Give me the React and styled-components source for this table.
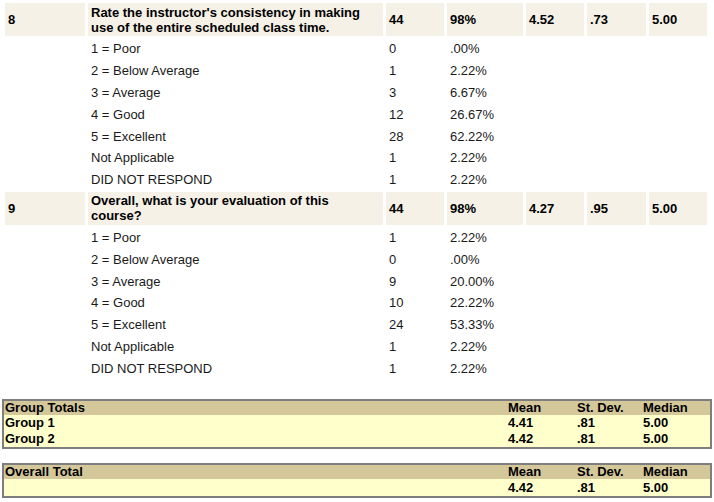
import React from "react";
import styled, { createGlobalStyle } from "styled-components";

const GlobalStyle = createGlobalStyle`
  html, body { margin: 0; padding: 0; background: #ffffff; }
  body {
    font-family: "Liberation Sans", Arial, sans-serif;
    font-size: 13px;
    color: #000;
  }
`;

const Page = styled.div`
  width: 714px;
  padding: 3px 2px 0 2px;
  box-sizing: border-box;
`;

const Survey = styled.div`
  display: grid;
  grid-template-columns: 80px 295px 58px 76px 58px 59px 58px;
  column-gap: 3px;
  row-gap: 3px;
  margin-left: 3px;
`;

const HeadCell = styled.div`
  background: #f5f1e6;
  height: 33px;
  display: flex;
  align-items: center;
  padding: 0 3px;
  font-weight: bold;
  font-size: 13px;
  line-height: 15px;
  color: #000;
  box-sizing: border-box;
`;

const OptCell = styled.div`
  height: 18.8px;
  display: flex;
  align-items: center;
  padding: 1px 3px 0;
  font-size: 13px;
  color: #1a1a1a;
  box-sizing: border-box;
`;

const TotalsBox = styled.div`
  border: 2px solid #7e7e7e;
  margin-top: ${(p) => p.$top}px;
  width: 710px;
  box-sizing: border-box;
  font-weight: bold;
  font-size: 13px;
  color: #000;
`;

const TotalsRow = styled.div`
  display: grid;
  grid-template-columns: 503px 69px 66px 1fr;
  background: ${(p) => (p.$head ? "#d4c89b" : "#ffffcc")};
  height: ${(p) => p.$h}px;
  line-height: ${(p) => p.$h}px;
`;

const TotalsCell = styled.div`
  padding-left: 1px;
  white-space: nowrap;
`;

const questions = [
  {
    n: "8",
    text: "Rate the instructor's consistency in making use of the entire scheduled class time.",
    count: "44",
    rate: "98%",
    mean: "4.52",
    sd: ".73",
    median: "5.00",
    opts: [
      ["1 = Poor", "0", ".00%"],
      ["2 = Below Average", "1", "2.22%"],
      ["3 = Average", "3", "6.67%"],
      ["4 = Good", "12", "26.67%"],
      ["5 = Excellent", "28", "62.22%"],
      ["Not Applicable", "1", "2.22%"],
      ["DID NOT RESPOND", "1", "2.22%"],
    ],
  },
  {
    n: "9",
    text: "Overall, what is your evaluation of this course?",
    count: "44",
    rate: "98%",
    mean: "4.27",
    sd: ".95",
    median: "5.00",
    opts: [
      ["1 = Poor", "1", "2.22%"],
      ["2 = Below Average", "0", ".00%"],
      ["3 = Average", "9", "20.00%"],
      ["4 = Good", "10", "22.22%"],
      ["5 = Excellent", "24", "53.33%"],
      ["Not Applicable", "1", "2.22%"],
      ["DID NOT RESPOND", "1", "2.22%"],
    ],
  },
];

export default function App() {
  return (
    <Page>
      <GlobalStyle />
      <Survey>
        {questions.map((q) => (
          <React.Fragment key={q.n}>
            <HeadCell>{q.n}</HeadCell>
            <HeadCell>{q.text}</HeadCell>
            <HeadCell>{q.count}</HeadCell>
            <HeadCell>{q.rate}</HeadCell>
            <HeadCell>{q.mean}</HeadCell>
            <HeadCell>{q.sd}</HeadCell>
            <HeadCell>{q.median}</HeadCell>
            {q.opts.map(([label, c, p]) => (
              <React.Fragment key={label}>
                <OptCell />
                <OptCell>{label}</OptCell>
                <OptCell>{c}</OptCell>
                <OptCell>{p}</OptCell>
                <OptCell />
                <OptCell />
                <OptCell />
              </React.Fragment>
            ))}
          </React.Fragment>
        ))}
      </Survey>

      <TotalsBox $top={21.4}>
        <TotalsRow $head $h={14}>
          <TotalsCell>Group Totals</TotalsCell>
          <TotalsCell>Mean</TotalsCell>
          <TotalsCell>St. Dev.</TotalsCell>
          <TotalsCell>Median</TotalsCell>
        </TotalsRow>
        <TotalsRow $h={16}>
          <TotalsCell>Group 1</TotalsCell>
          <TotalsCell>4.41</TotalsCell>
          <TotalsCell>.81</TotalsCell>
          <TotalsCell>5.00</TotalsCell>
        </TotalsRow>
        <TotalsRow $h={16}>
          <TotalsCell>Group 2</TotalsCell>
          <TotalsCell>4.42</TotalsCell>
          <TotalsCell>.81</TotalsCell>
          <TotalsCell>5.00</TotalsCell>
        </TotalsRow>
      </TotalsBox>

      <TotalsBox $top={14}>
        <TotalsRow $head $h={14}>
          <TotalsCell>Overall Total</TotalsCell>
          <TotalsCell>Mean</TotalsCell>
          <TotalsCell>St. Dev.</TotalsCell>
          <TotalsCell>Median</TotalsCell>
        </TotalsRow>
        <TotalsRow $h={17}>
          <TotalsCell />
          <TotalsCell>4.42</TotalsCell>
          <TotalsCell>.81</TotalsCell>
          <TotalsCell>5.00</TotalsCell>
        </TotalsRow>
      </TotalsBox>
    </Page>
  );
}
